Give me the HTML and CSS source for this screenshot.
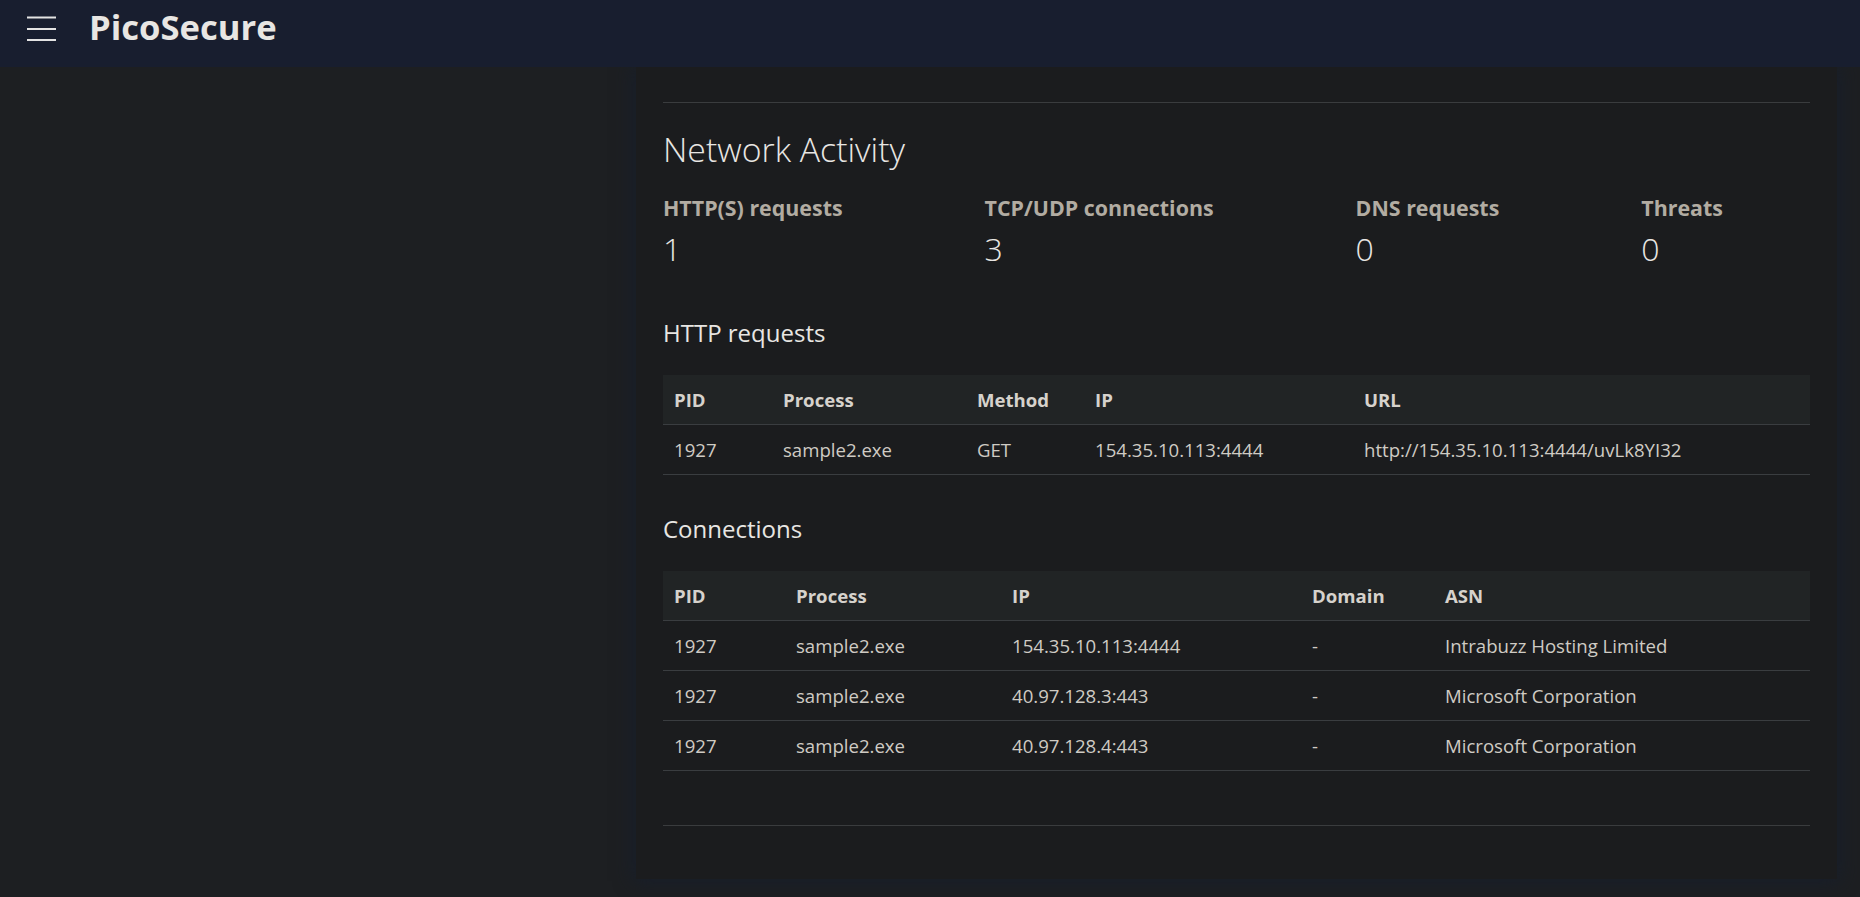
FILE: index.html
```html
<!DOCTYPE html>
<html lang="en">
<head>
<meta charset="utf-8">
<title>PicoSecure</title>
<link rel="stylesheet" href="styles.css">
</head>
<body>
<header class="topbar">
  <svg class="burger" width="29" height="26" viewBox="0 0 29 26" aria-hidden="true">
    <rect x="0" y="0.5" width="29" height="2" fill="#e3e3e3"/>
    <rect x="0" y="12" width="29" height="2" fill="#e3e3e3"/>
    <rect x="0" y="23" width="29" height="2" fill="#e3e3e3"/>
  </svg>
  <span class="brand">PicoSecure</span>
</header>
<div class="layout">
  <aside class="side"></aside>
  <main class="main">
    <section class="card">
      <hr class="rule">
      <h2 class="title">Network Activity</h2>
      <div class="stats">
        <div class="stat"><div class="stat-label">HTTP(S) requests</div><div class="stat-value">1</div></div>
        <div class="stat"><div class="stat-label">TCP/UDP connections</div><div class="stat-value">3</div></div>
        <div class="stat"><div class="stat-label">DNS requests</div><div class="stat-value">0</div></div>
        <div class="stat"><div class="stat-label">Threats</div><div class="stat-value">0</div></div>
      </div>

      <h3 class="subtitle">HTTP requests</h3>
      <table class="grid">
        <colgroup>
          <col class="h1"><col class="h2"><col class="h3"><col class="h4"><col>
        </colgroup>
        <thead>
          <tr><th>PID</th><th>Process</th><th>Method</th><th>IP</th><th>URL</th></tr>
        </thead>
        <tbody>
          <tr><td>1927</td><td>sample2.exe</td><td>GET</td><td>154.35.10.113:4444</td><td>http://154.35.10.113:4444/uvLk8YI32</td></tr>
        </tbody>
      </table>

      <h3 class="subtitle">Connections</h3>
      <table class="grid">
        <colgroup>
          <col class="c1"><col class="c2"><col class="c3"><col class="c4"><col>
        </colgroup>
        <thead>
          <tr><th>PID</th><th>Process</th><th>IP</th><th>Domain</th><th>ASN</th></tr>
        </thead>
        <tbody>
          <tr><td>1927</td><td>sample2.exe</td><td>154.35.10.113:4444</td><td>-</td><td>Intrabuzz Hosting Limited</td></tr>
          <tr><td>1927</td><td>sample2.exe</td><td>40.97.128.3:443</td><td>-</td><td>Microsoft Corporation</td></tr>
          <tr><td>1927</td><td>sample2.exe</td><td>40.97.128.4:443</td><td>-</td><td>Microsoft Corporation</td></tr>
        </tbody>
      </table>
      <hr class="rule bottom">
    </section>
  </main>
</div>
</body>
</html>
```

FILE: styles.css
```css
* { box-sizing: border-box; }
html, body { margin: 0; padding: 0; }
body {
  background: #1d1f22;
  color: #e8e6e3;
  font-family: "Open Sans", "Noto Sans", sans-serif;
  height: 897px;
  overflow: hidden;
}
.topbar {
  position: relative;
  z-index: 2;
  height: 67px;
  background: #181e2f;
  display: flex;
  align-items: flex-start;
  padding-left: 27px;
}
.burger { margin-top: 16px; display: block; }
.brand {
  margin-left: 33px;
  margin-top: 7px;
  font-size: 34.6px;
  line-height: 40px;
  font-weight: 700;
  color: #e8e6e3;
}
.layout { display: flex; }
.side { width: 620px; flex: none; }
.main { flex: 1; padding: 0 23px 0 16px; }
.card {
  background: #1b1c1e;
  box-shadow: 0 0 18px 2px rgba(22, 30, 44, 0.9);
  padding: 35px 27px 53px;
}
.rule {
  border: 0;
  border-top: 1px solid #3a3c3e;
  margin: 0;
}
.title {
  margin: 26.5px 0 0;
  font-size: 33.8px;
  line-height: 38.4px;
  font-weight: 300;
  color: #e8e6e3;
}
.stats {
  display: flex;
  gap: 142px;
  margin-top: 27.7px;
}
.stat-label {
  font-size: 21.4px;
  line-height: 24px;
  font-weight: 700;
  color: #b2aca2;
}
.stat-value {
  margin-top: 10px;
  font-size: 32px;
  line-height: 38.4px;
  font-weight: 300;
  color: #e8e6e3;
}
.subtitle {
  margin: 50.8px 0 0;
  font-size: 24px;
  line-height: 28.8px;
  font-weight: 400;
  color: #e8e6e3;
}
.subtitle + .grid { margin-top: 27.6px; }
.grid + .subtitle { margin-top: 39.6px; }
.grid {
  width: 100%;
  border-collapse: collapse;
  table-layout: fixed;
  font-size: 18.6px;
}
.grid th, .grid td {
  text-align: left;
  padding: 11.5px 9px 12.5px 11px;
  line-height: normal;
  border-bottom: 1px solid #3a3d40;
  white-space: nowrap;
}
.grid th {
  background: #212425;
  font-weight: 700;
  color: #d6d2cc;
}
.grid td {
  font-weight: 400;
  color: #cfcbc4;
}
.grid .h1 { width: 109px; }
.grid .h2 { width: 194px; }
.grid .h3 { width: 118px; }
.grid .h4 { width: 269px; }
.grid .c1 { width: 122px; }
.grid .c2 { width: 216px; }
.grid .c3 { width: 300px; }
.grid .c4 { width: 133px; }
.bottom { margin-top: 53.5px; }
```
